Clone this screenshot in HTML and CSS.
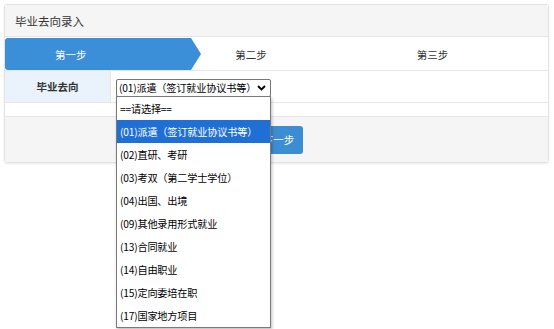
FILE: index.html
```html
<!DOCTYPE html>
<html lang="zh">
<head>
<meta charset="utf-8">
<link rel="stylesheet" href="styles.css">
</head>
<body>
<div class="panel">
  <div class="panel-heading">毕业去向录入</div>
  <div class="steps">
    <div class="step active"><span>第一步</span></div>
    <div class="step second"><span>第二步</span></div>
    <div class="step third"><span>第三步</span></div>
  </div>
  <div class="row">
    <div class="label">毕业去向</div>
    <div class="field">
      <div class="select-wrap">
        <div class="select">
          <span class="select-text">(01)派遣（签订就业协议书等）</span>
          <svg class="caret" width="9" height="6" viewBox="0 0 9 6"><path d="M1 1 L4.5 4.5 L8 1" fill="none" stroke="#000" stroke-width="1.8"/></svg>
        </div>
        <ul class="dropdown">
          <li>==请选择==</li>
          <li class="sel">(01)派遣（签订就业协议书等）</li>
          <li>(02)直研、考研</li>
          <li>(03)考双（第二学士学位）</li>
          <li>(04)出国、出境</li>
          <li>(09)其他录用形式就业</li>
          <li>(13)合同就业</li>
          <li>(14)自由职业</li>
          <li>(15)定向委培在职</li>
          <li>(17)国家地方项目</li>
        </ul>
      </div>
    </div>
  </div>
  <div class="blank"></div>
  <div class="footer">
    <button class="btn">下一步</button>
  </div>
</div>
</body>
</html>
```
FILE: styles.css
```css
* { box-sizing: border-box; }
html, body { min-height: 100%; }
body {
  margin: 0;
  min-height: 329px;
  padding-top: 4px;
  background: #fff;
  font-family: "Microsoft YaHei", "Noto Sans CJK SC", "Liberation Sans", sans-serif;
  color: #333;
}
.panel {
  margin: 0 0 0 4px;
  width: 545px;
  border: 1px solid #e2e2e2;
  border-radius: 3px;
  box-shadow: 0 1px 2px rgba(0,0,0,0.08);
}
.panel-heading {
  height: 32px;
  line-height: 32px;
  padding-left: 10px;
  background: #f5f5f5;
  border-bottom: 1px solid #e6e6e6;
  font-size: 11.5px;
  color: #333;
}
.steps {
  display: flex;
  height: 33px;
  margin-top: 1px;
  border-bottom: 1px solid #e6e6e6;
}
.step {
  display: flex;
  align-items: center;
  justify-content: center;
  font-size: 10.5px;
  color: #333;
}
.step.active {
  flex: 0 0 196px;
  color: #fff;
  background: #3a8fd8;
  border-radius: 3px 0 0 3px;
  clip-path: polygon(0 0, 186px 0, 196px 50%, 186px 100%, 0 100%);
  justify-content: flex-start;
  padding-left: 50px;
}
.step.second { flex: 0 0 100px; }
.step.third { flex: 1; padding-left: 16px; }
.row {
  display: flex;
  height: 32px;
  border-bottom: 1px solid #e6e6e6;
}
.label {
  flex: 0 0 106px;
  background: #eaf3fb;
  border-right: 1px solid #e6e6e6;
  display: flex;
  align-items: center;
  justify-content: center;
  font-size: 10.5px;
  font-weight: bold;
  color: #333;
}
.field {
  flex: 1;
  display: flex;
  align-items: center;
  padding-left: 5px;
  padding-top: 2px;
}
.select-wrap { position: relative; }
.select {
  width: 155px;
  height: 18px;
  border: 1px solid #767676;
  border-radius: 2px;
  display: flex;
  align-items: center;
  justify-content: space-between;
  padding: 0 4px 0 2px;
  background: #fff;
  font-size: 10.2px;
  color: #000;
  white-space: nowrap;
  overflow: hidden;
}
.select-text { letter-spacing: -0.2px; }
.caret { margin-top: 1px; flex: 0 0 9px; }
.dropdown {
  position: absolute;
  left: 0;
  top: 17px;
  width: 155px;
  margin: 0;
  padding: 0;
  list-style: none;
  background: #fff;
  border: 1px solid #7a7a7a;
  box-shadow: 1px 2px 3px rgba(0,0,0,0.25);
  z-index: 10;
}
.dropdown li {
  height: 23px;
  line-height: 23px;
  padding-left: 3px;
  font-size: 10.2px;
  color: #000;
  white-space: nowrap;
  letter-spacing: -0.2px;
}
.dropdown li.sel {
  background: #1f6fd4;
  color: #fff;
}
.blank {
  height: 14px;
  border-bottom: 1px solid #e6e6e6;
}
.footer {
  height: 45px;
  background: #f5f5f5;
  display: flex;
  align-items: center;
  justify-content: center;
}
.btn {
  width: 48px;
  height: 28px;
  border: none;
  border-radius: 3px;
  background: #3c8dd2;
  color: #fff;
  font-family: inherit;
  font-size: 10.5px;
  margin-left: 4px;
}
```
